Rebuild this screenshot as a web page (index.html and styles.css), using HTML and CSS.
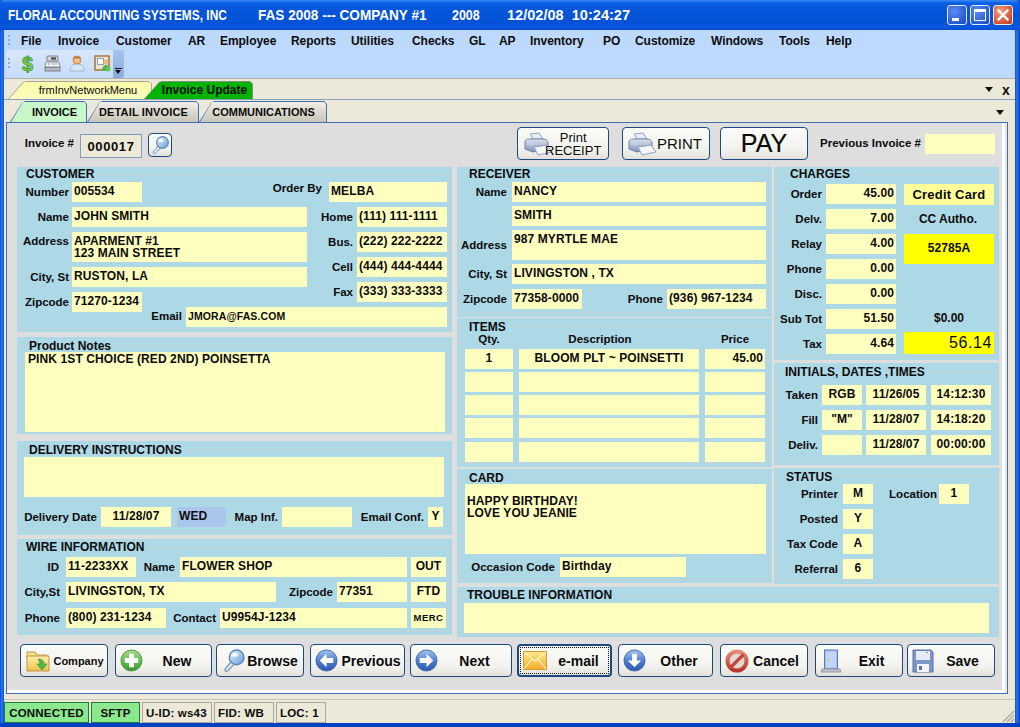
FILE: index.html
```html
<!DOCTYPE html>
<html lang="en">
<head>
<meta charset="utf-8">
<title>Floral Accounting Systems</title>
<link rel="stylesheet" href="styles.css">
</head>
<body>
<svg class="defs" aria-hidden="true">
  <defs>
    <linearGradient id="gBlue" x1="0" y1="0" x2="0" y2="1"><stop offset="0" stop-color="#a9c4f0"/><stop offset=".5" stop-color="#4f7fd0"/><stop offset="1" stop-color="#2f58a8"/></linearGradient>
    <linearGradient id="gGreen" x1="0" y1="0" x2="0" y2="1"><stop offset="0" stop-color="#a8dc90"/><stop offset=".6" stop-color="#5cb84c"/><stop offset="1" stop-color="#3c9636"/></linearGradient>
    <linearGradient id="gMail" x1="0" y1="0" x2="0" y2="1"><stop offset="0" stop-color="#ffe78a"/><stop offset="1" stop-color="#f4ae2e"/></linearGradient>
    <linearGradient id="gFolder" x1="0" y1="0" x2="0" y2="1"><stop offset="0" stop-color="#fff0a8"/><stop offset="1" stop-color="#efc04a"/></linearGradient>
    <linearGradient id="gPrint" x1="0" y1="0" x2="0" y2="1"><stop offset="0" stop-color="#dfe4ee"/><stop offset="1" stop-color="#7f93b8"/></linearGradient>
    <linearGradient id="gLens" x1="0" y1="0" x2="1" y2="1"><stop offset="0" stop-color="#eef6ff"/><stop offset="1" stop-color="#5f9ad8"/></linearGradient>
    <linearGradient id="gRed" x1="0" y1="0" x2="0" y2="1"><stop offset="0" stop-color="#e48a78"/><stop offset="1" stop-color="#b8382a"/></linearGradient>
    <symbol id="iPrinter" viewBox="0 0 30 24">
      <path d="M7 2l9-1 4 6H10z" fill="#e8edf5" stroke="#8ea0c0"/>
      <path d="M2 10c0-2 2-3 4-3h14c3 0 5 2 5 4v5l-15 4-8-3z" fill="url(#gPrint)" stroke="#6f82a8"/>
      <path d="M11 15l13-2 5 7-14 3z" fill="#f4f6fa" stroke="#8ea0c0"/>
      <ellipse cx="9" cy="11" rx="4" ry="2" fill="#c4d0e8"/>
    </symbol>
    <symbol id="iLens" viewBox="0 0 24 24">
      <path d="M10 13l-6 7c-1 2 1 3 2.500 2l6.500-6.500z" fill="#dce6f2" stroke="#6d8cb0"/>
      <circle cx="15" cy="9" r="7" fill="url(#gLens)" stroke="#5d86b8" stroke-width="1.400"/>
      <ellipse cx="13" cy="6.500" rx="3.500" ry="2" fill="#fff" opacity=".8"/>
    </symbol>
  </defs>
</svg>

<div class="window">
  <header class="titlebar">
    <span class="tt tt-a"><b>FLORAL ACCOUNTING SYSTEMS, INC</b></span>
    <span class="tt tt-b"><b>FAS 2008 --- COMPANY #1</b></span>
    <span class="tt tt-c"><b>2008</b></span>
    <span class="tt tt-d"><b>12/02/08&nbsp; 10:24:27</b></span>
    <div class="winbtns">
      <span class="wb"><i class="wb-min"></i></span>
      <span class="wb"><i class="wb-max"></i></span>
      <span class="wb wb-close"><svg viewBox="0 0 20 20" width="20" height="20"><path d="M5.500 5.500l9 9M14.500 5.500l-9 9" stroke="#fff" stroke-width="2.400" stroke-linecap="square"/></svg></span>
    </div>
  </header>

  <div class="menuarea">
    <nav class="menubar">
      <span class="grip"></span>
      <span class="mi m-file">File</span><span class="mi m-inv">Invoice</span><span class="mi m-cus">Customer</span><span class="mi m-ar">AR</span><span class="mi m-emp">Employee</span><span class="mi m-rep">Reports</span><span class="mi m-uti">Utilities</span><span class="mi m-che">Checks</span><span class="mi m-gl">GL</span><span class="mi m-ap">AP</span><span class="mi m-ivt">Inventory</span><span class="mi m-po">PO</span><span class="mi m-cst">Customize</span><span class="mi m-win">Windows</span><span class="mi m-too">Tools</span><span class="mi m-hlp">Help</span>
    </nav>
    <div class="toolbar">
      <span class="grip grip-tb"></span>
      <span class="tb-dollar">$</span>
      <svg class="tb-icon tb-reg" viewBox="0 0 17 17" width="17" height="17"><rect x="3" y="1" width="11" height="5" rx="1" fill="#d4d8de" stroke="#7c828c"/><rect x="7" y="2.500" width="5" height="2" fill="#3a3f48"/><path d="M2 7h13l1 5H1z" fill="#f2f3f5" stroke="#8a9098"/><rect x="1" y="12.500" width="15" height="3.500" fill="#b6bcc6" stroke="#7c828c"/><path d="M4 9h2M8 9h2M11 9h2" stroke="#8a9098"/></svg>
      <svg class="tb-icon tb-per" viewBox="0 0 16 17" width="16" height="17"><path d="M1 16c0-5 3-7 7-7s7 2 7 7z" fill="#d8e6f8" stroke="#9cb4d8"/><circle cx="8" cy="5" r="4" fill="#f4be82" stroke="#c48a4a"/><path d="M4 4c1-3 7-3 8 0-3-1-5-1-8 0z" fill="#b8722a"/></svg>
      <svg class="tb-icon tb-card" viewBox="0 0 17 17" width="17" height="17"><rect x="1" y="1" width="14" height="14" fill="#f0e4d0" stroke="#a8743c" stroke-width="1.500"/><rect x="3.500" y="3.500" width="6" height="6" fill="#fff" stroke="#8aa0c0"/><circle cx="12" cy="7" r="2.500" fill="#f0b878"/><path d="M8 16c0-4 2-6 4-6s4 2 4 6z" fill="#4fb848"/><circle cx="14" cy="14" r="2.500" fill="#62c85a"/></svg>
      <span class="tb-more"><i></i></span>
    </div>
  </div>

  <div class="doc-tabs">
    <span class="doc-tab doc-yellow"><span>frmInvNetworkMenu</span></span>
    <span class="doc-tab doc-green"><span>Invoice Update</span></span>
    <span class="tri tri-doc"></span>
    <span class="doc-x">x</span>
  </div>

  <div class="sub-tabs">
    <span class="sub-tab sub-a"><span>INVOICE</span></span>
    <span class="sub-tab sub-b"><span>DETAIL INVOICE</span></span>
    <span class="sub-tab sub-c"><span>COMMUNICATIONS</span></span>
    <span class="tri tri-sub"></span>
  </div>

  <main class="frame">
    <div class="form">
      <div class="form-top">
        <span class="lb inv-lb">Invoice #</span>
        <span class="inv-no">000017</span>
        <button class="btn btn-find"><svg viewBox="0 0 24 24" width="20" height="20"><use href="#iLens"/></svg></button>
        <button class="btn btn-receipt"><svg viewBox="0 0 30 24" width="30" height="24"><use href="#iPrinter"/></svg><span>Print<br>RECEIPT</span></button>
        <button class="btn btn-print"><svg viewBox="0 0 30 24" width="30" height="24"><use href="#iPrinter"/></svg><span>PRINT</span></button>
        <button class="btn btn-pay">PAY</button>
        <span class="lb prev-lb">Previous Invoice #</span>
        <span class="f w70"></span>
      </div>

      <div class="form-main">
        <div class="col-left">
          <section class="panel h-cust">
            <div class="box cust">
              <h2 class="legend lg-cust">CUSTOMER</h2>
              <div class="cust-cols">
                <div class="cust-l">
                  <div class="r"><span class="lb w48 mr3">Number</span><span class="f w70">005534</span></div>
                  <div class="r"><span class="lb w48 mr3">Name</span><span class="f w235">JOHN SMITH</span></div>
                  <div class="r r-top"><span class="lb w48 mr3 lb-addr">Address</span><span class="f w235 ta2">APARMENT #1<br>123 MAIN STREET</span></div>
                  <div class="r"><span class="lb w48 mr3">City, St</span><span class="f w235">RUSTON, LA</span></div>
                  <div class="r"><span class="lb w48 mr3">Zipcode</span><span class="f w70">71270-1234</span></div>
                </div>
                <div class="cust-r">
                  <div class="r re"><span class="lb orderby">Order By</span><span class="f w118">MELBA</span></div>
                  <div class="r re"><span class="lb">Home</span><span class="f w90">(111) 111-1111</span></div>
                  <div class="r re"><span class="lb">Bus.</span><span class="f w90">(222) 222-2222</span></div>
                  <div class="r re"><span class="lb">Cell</span><span class="f w90">(444) 444-4444</span></div>
                  <div class="r re"><span class="lb">Fax</span><span class="f w90">(333) 333-3333</span></div>
                </div>
              </div>
              <div class="r re cust-email"><span class="lb lb-up">Email</span><span class="f w261 f-small">JMORA@FAS.COM</span></div>
            </div>
          </section>

          <section class="panel h-notes">
            <div class="box notes">
              <h2 class="legend lg-notes">Product Notes</h2>
              <div class="f w420 h80 ftop">PINK 1ST CHOICE (RED 2ND) POINSETTA</div>
            </div>
          </section>

          <section class="panel h-deliv">
            <div class="box deliv">
              <h2 class="legend lg-deliv">DELIVERY INSTRUCTIONS</h2>
              <div class="f w420 h40"></div>
              <div class="r deliv-row">
                <span class="lb w75">Delivery Date</span><span class="f w70 tc">11/28/07</span>
                <span class="f f-blue w49 ml6">WED</span>
                <span class="lb w52">Map Inf.</span><span class="f w70"></span>
                <span class="lb w72">Email Conf.</span><span class="f w15 tc">Y</span>
              </div>
            </div>
          </section>

          <section class="panel h-wire">
            <div class="box wire">
              <h2 class="legend lg-wire">WIRE INFORMATION</h2>
              <div class="r"><span class="lb w38 mr7">ID</span><span class="f w70">11-2233XX</span><span class="lb w39 mr5">Name</span><span class="f w227">FLOWER SHOP</span><span class="f w35 ml4 tc">OUT</span></div>
              <div class="r mt5"><span class="lb w39 mr6">City,St</span><span class="f w210">LIVINGSTON, TX</span><span class="lb w57">Zipcode</span><span class="f w70">77351</span><span class="f w35 ml4 tc">FTD</span></div>
              <div class="r mt6"><span class="lb w39 mr6">Phone</span><span class="f w100">(800) 231-1234</span><span class="lb w50">Contact</span><span class="f w187">U9954J-1234</span><span class="f w35 ml4 tc f-tiny">MERC</span></div>
            </div>
          </section>
        </div>

        <div class="col-rest">
          <div class="rest-top">
            <div class="col-mid">
              <section class="panel h-recv">
                <div class="box recv">
                  <h2 class="legend lg-recv">RECEIVER</h2>
                  <div class="r"><span class="lb w46 mr5">Name</span><span class="f w254">NANCY</span></div>
                  <div class="r mt4"><span class="lb w46 mr5"></span><span class="f w254">SMITH</span></div>
                  <div class="r mt4"><span class="lb w46 mr5">Address</span><span class="f w254 h30 ftop">987 MYRTLE MAE</span></div>
                  <div class="r mt4"><span class="lb w46 mr5">City, St</span><span class="f w254">LIVINGSTON , TX</span></div>
                  <div class="r mt5"><span class="lb w46 mr5">Zipcode</span><span class="f w70">77358-0000</span><span class="lb w81">Phone</span><span class="f w99">(936) 967-1234</span></div>
                </div>
              </section>

              <section class="panel h-items">
                <div class="box items">
                  <h2 class="legend lg-items">ITEMS</h2>
                  <div class="items-grid">
                    <span class="ih">Qty.</span><span class="ih ih-d">Description</span><span class="ih">Price</span>
                    <span class="f tc">1</span><span class="f tc">BLOOM PLT ~ POINSETTI</span><span class="f tr">45.00</span>
                    <span class="f"></span><span class="f"></span><span class="f"></span>
                    <span class="f"></span><span class="f"></span><span class="f"></span>
                    <span class="f"></span><span class="f"></span><span class="f"></span>
                    <span class="f it-last"></span><span class="f it-last"></span><span class="f it-last"></span>
                  </div>
                </div>
              </section>

              <section class="panel h-card">
                <div class="box card">
                  <h2 class="legend lg-card">CARD</h2>
                  <div class="f w301 h70 card-msg">HAPPY BIRTHDAY!<br>LOVE YOU JEANIE</div>
                  <div class="r mt3"><span class="lb w90 mr5">Occasion Code</span><span class="f w126">Birthday</span></div>
                </div>
              </section>
            </div>

            <div class="col-right">
              <section class="panel h-chg">
                <div class="box chg">
                  <h2 class="legend lg-chg">CHARGES</h2>
                  <div class="chg-cols">
                    <div class="chg-l">
                      <div class="r"><span class="lb w44">Order</span><span class="f w70 tr">45.00</span></div>
                      <div class="r"><span class="lb w44">Delv.</span><span class="f w70 tr">7.00</span></div>
                      <div class="r"><span class="lb w44">Relay</span><span class="f w70 tr">4.00</span></div>
                      <div class="r"><span class="lb w44">Phone</span><span class="f w70 tr">0.00</span></div>
                      <div class="r"><span class="lb w44">Disc.</span><span class="f w70 tr">0.00</span></div>
                      <div class="r"><span class="lb w44">Sub Tot</span><span class="f w70 tr">51.50</span></div>
                      <div class="r"><span class="lb w44">Tax</span><span class="f w70 tr">4.64</span></div>
                    </div>
                    <div class="chg-r">
                      <span class="f f-pay tc">Credit Card</span>
                      <span class="chg-note">CC Autho.</span>
                      <span class="f f-auth tc">52785A</span>
                      <span class="chg-zero">$0.00</span>
                      <span class="f f-total tr">56.14</span>
                    </div>
                  </div>
                </div>
              </section>

              <section class="panel h-init">
                <div class="box init">
                  <h2 class="legend lg-init">INITIALS, DATES ,TIMES</h2>
                  <div class="r"><span class="lb w40">Taken</span><span class="f w40 tc">RGB</span><span class="f w60 ml4 tc">11/26/05</span><span class="f w60 ml5 tc">14:12:30</span></div>
                  <div class="r mt5"><span class="lb w40">Fill</span><span class="f w40 tc">"M"</span><span class="f w60 ml4 tc">11/28/07</span><span class="f w60 ml5 tc">14:18:20</span></div>
                  <div class="r mt5"><span class="lb w40">Deliv.</span><span class="f w40 tc"></span><span class="f w60 ml4 tc">11/28/07</span><span class="f w60 ml5 tc">00:00:00</span></div>
                </div>
              </section>

              <section class="panel h-stat">
                <div class="box stat">
                  <h2 class="legend lg-stat">STATUS</h2>
                  <div class="r"><span class="lb w60 mr5">Printer</span><span class="f w30 tc">M</span><span class="lb lb-loc">Location</span><span class="f w30 tc">1</span></div>
                  <div class="r mt5"><span class="lb w60 mr5">Posted</span><span class="f w30 tc">Y</span></div>
                  <div class="r mt5"><span class="lb w60 mr5">Tax Code</span><span class="f w30 tc">A</span></div>
                  <div class="r mt5"><span class="lb w60 mr5">Referral</span><span class="f w30 tc">6</span></div>
                </div>
              </section>
            </div>
          </div>

          <section class="panel h-trbl">
            <div class="box trbl">
              <h2 class="legend lg-trbl">TROUBLE INFORMATION</h2>
              <div class="f w525 h30"></div>
            </div>
          </section>
        </div>
      </div>

      <div class="form-buttons">
        <button class="btn b-company"><svg viewBox="0 0 26 24" width="26" height="24"><path d="M1 6V3h8l2 3h10v4H1z" fill="#f8e08a" stroke="#c0964a"/><path d="M1 22V7h22v15z" fill="url(#gFolder)" stroke="#c0964a"/><path d="M12 10c4 0 6 2 6 5h3l-5 6-5-6h3c0-2-1-3-2-5z" fill="#54b848" stroke="#2f8a30" stroke-width=".6"/></svg><span>Company</span></button>
        <button class="btn b-new"><svg viewBox="0 0 24 24" width="23" height="23"><circle cx="12" cy="12" r="11" fill="url(#gGreen)" stroke="#4f9a46"/><path d="M9.500 5h5v4.500H19v5h-4.500V19h-5v-4.500H5v-5h4.500z" fill="#fff"/></svg><span>New</span></button>
        <button class="btn b-browse"><svg viewBox="0 0 24 24" width="25" height="25"><use href="#iLens"/></svg><span>Browse</span></button>
        <button class="btn b-prev"><svg viewBox="0 0 24 24" width="23" height="23"><circle cx="12" cy="12" r="11" fill="url(#gBlue)" stroke="#3f66b4"/><path d="M12 5l-7 7 7 7v-4.500h7v-5h-7z" fill="#fff"/></svg><span>Previous</span></button>
        <button class="btn b-next"><svg viewBox="0 0 24 24" width="23" height="23"><circle cx="12" cy="12" r="11" fill="url(#gBlue)" stroke="#3f66b4"/><path d="M12 5l7 7-7 7v-4.500H5v-5h7z" fill="#fff"/></svg><span>Next</span></button>
        <button class="btn b-mail"><svg viewBox="0 0 24 19" width="24" height="19"><rect x=".5" y=".5" width="23" height="18" fill="url(#gMail)" stroke="#d09a30"/><path d="M1 1l11 9L23 1M1 18l8-10M23 18l-8-10" fill="none" stroke="#fff4c0" stroke-width="1.200"/></svg><span>e-mail</span></button>
        <button class="btn b-other"><svg viewBox="0 0 24 24" width="23" height="23"><circle cx="12" cy="12" r="11" fill="url(#gBlue)" stroke="#3f66b4"/><path d="M5 12l7 7 7-7h-4.500V5h-5v7z" fill="#fff"/></svg><span>Other</span></button>
        <button class="btn b-cancel"><svg viewBox="0 0 24 24" width="24" height="24"><circle cx="12" cy="12" r="9.500" fill="#e8d8d4" stroke="url(#gRed)" stroke-width="4"/><path d="M5.500 18.500l13-13" stroke="#c4483a" stroke-width="3.200"/></svg><span>Cancel</span></button>
        <button class="btn b-exit"><svg viewBox="0 0 20 24" width="20" height="24"><rect x="3.500" y="1" width="13" height="19" fill="#a8c0ea" stroke="#5a7cb8"/><rect x="5" y="2.500" width="10" height="16" fill="#c0d4f4"/><circle cx="7" cy="11" r="1" fill="#e8c050"/><path d="M1 20h18l1 3H0z" fill="#c0c4ca" stroke="#7c828c" stroke-width=".7"/></svg><span>Exit</span></button>
        <button class="btn b-save"><svg viewBox="0 0 22 24" width="22" height="24"><path d="M1 1h18l2 2v20H1z" fill="#7c96c8" stroke="#5a72a8"/><rect x="4" y="2" width="14" height="9" fill="#e6ecf6"/><rect x="14" y="3" width="2" height="1" fill="#7c96c8"/><rect x="5" y="15" width="12" height="8" fill="#f2f4f8"/><rect x="7" y="17" width="3" height="4" fill="#5a72a8"/></svg><span>Save</span></button>
      </div>
    </div>
  </main>

  <footer class="status">
    <span class="st st-on st-a">CONNECTED</span>
    <span class="st st-on st-b">SFTP</span>
    <span class="st st-c">U-ID: ws43</span>
    <span class="st st-d">FID: WB</span>
    <span class="st st-e">LOC: 1</span>
    <svg class="st-grip" viewBox="0 0 14 14" width="14" height="14"><path d="M13 2L2 13M13 6l-7 7M13 10l-3 3" stroke="#a8a498" stroke-width="1.200"/></svg>
  </footer>
</div>
</body>
</html>
```

FILE: styles.css
```css
* { box-sizing: border-box; }
html, body { margin: 0; padding: 0; }
body { width: 1020px; height: 727px; overflow: hidden; background: #ece9d8; font: bold 12px "Liberation Sans", Arial, sans-serif; color: #0b0b0b; }
.defs { position: absolute; width: 0; height: 0; }

.window { width: 1020px; height: 727px; display: flex; flex-direction: column; padding: 0 5px 0 4px; background: linear-gradient(90deg, #0a50d8 0, #2a78f0 2px, #0a50d8 4px) left / 4px 100% no-repeat, linear-gradient(90deg, #0a50d8, #2a78f0 2px, #0638b8) right / 5px 100% no-repeat, #ece9d8; position: relative; border-bottom: 4px solid #0340c4; }

/* title bar */
.titlebar { height: 30px; flex: none; margin: 0 -5px 0 -4px; padding-left: 8px; display: flex; align-items: center; color: #fff; background: linear-gradient(#3a8af4 0, #0b5ee4 3px, #0554d8 12px, #0552d6 24px, #0a5ae0 28px, #0346c8 30px); border-radius: 6px 6px 0 0; }
.tt { display: block; flex: none; white-space: nowrap; }
.tt b { display: inline-block; font: bold 14px "Liberation Sans", sans-serif; transform: scaleX(.89); transform-origin: 0 50%; }
.tt-a { width: 250px; }
.tt-a b { transform: scaleX(.85); }
.tt-b { width: 194px; }
.tt-b b { transform: scaleX(.97); }
.tt-c { width: 55px; }
.tt-d { width: 140px; }
.tt-d b { transform: scaleX(1.04); }
.winbtns { margin-left: auto; margin-right: 7px; display: flex; gap: 3px; }
.wb { width: 20px; height: 20px; border: 1px solid #e4eefc; border-radius: 3px; background: radial-gradient(circle at 35% 30%, #5a8cf0, #2a5ad8 70%, #1a44b8); display: block; position: relative; overflow: hidden; }
.wb-close { background: radial-gradient(circle at 35% 30%, #f0a088, #de5a38 60%, #b83818); }
.wb i { display: block; position: absolute; }
.wb svg { position: absolute; left: -1px; top: -1px; }
.wb-min { left: 4px; bottom: 3px; width: 7px; height: 3px; background: #fff; }
.wb-max { left: 3px; top: 3px; width: 12px; height: 12px; border: 1px solid #fff; border-top-width: 3px; }

/* menu */
.menuarea { flex: none; background: #bdd9fd; border-bottom: 1px solid #b0b0a8; height: 49px; }
.menubar { height: 20px; padding-top: 2px; display: flex; align-items: center; font-size: 12px; position: relative; }
.grip { width: 2px; height: 12px; margin-left: 4px; background: repeating-linear-gradient(#8aa8d0 0 2px, transparent 2px 4px); flex: none; }
.mi { white-space: nowrap; letter-spacing: -.05px; }
.m-file { margin-left: 11px; width: 37px; }
.m-inv { width: 58px; }
.m-cus { width: 72px; }
.m-ar { width: 32px; }
.m-emp { width: 71px; }
.m-rep { width: 60px; }
.m-uti { width: 61px; }
.m-che { width: 57px; }
.m-gl { width: 30px; }
.m-ap { width: 31px; }
.m-ivt { width: 73px; }
.m-po { width: 32px; }
.m-cst { width: 76px; }
.m-win { width: 68px; }
.m-too { width: 47px; }

.toolbar { width: 118px; margin-left: 2px; height: 28px; display: flex; align-items: center; background: linear-gradient(#d8e7fb, #c6dcf8); border-radius: 3px 0 3px 3px; position: relative; }
.grip-tb { margin-left: 2px; }
.tb-dollar { font: bold 20px "Liberation Sans", sans-serif; color: #84cc54; -webkit-text-stroke: .8px #3f9a34; width: 13px; margin-left: 12px; line-height: 27px; }
.tb-icon { display: block; flex: none; }
.tb-reg { margin-left: 9px; margin-top: -1px; }
.tb-per { margin-left: 8px; margin-top: -1px; }
.tb-card { margin-left: 9px; margin-top: -1px; }
.tb-more { margin-left: auto; width: 11px; height: 28px; background: linear-gradient(#a8c4ee, #8aa8dc); position: relative; border-radius: 0 0 3px 0; }
.tb-more i { position: absolute; left: 2px; bottom: 4px; border: 3.500px solid transparent; border-top: 4px solid #111; border-bottom: 0; }
.tb-more::before { content: ""; position: absolute; left: 2px; bottom: 9px; width: 7px; height: 1px; background: #111; }

/* document tabs */
.doc-tabs { height: 21px; flex: none; display: flex; align-items: flex-end; padding-left: 4px; border-bottom: 1px solid #88a0bc; position: relative; }
.doc-tab { height: 18px; position: relative; display: block; background: #8e8e80; clip-path: polygon(0 100%, 15px 1px, 18px 0, calc(100% - 3px) 0, 100% 3px, 100% 100%); font-size: 12px; text-align: center; line-height: 19px; white-space: nowrap; }
.doc-tab::before { content: ""; position: absolute; inset: 1px 1px 0 1px; clip-path: polygon(0 100%, 15px 0, calc(100% - 2px) 0, 100% 2px, 100% 100%); }
.doc-tab > span { position: relative; }
.doc-yellow { width: 144px; padding-left: 16px; font-weight: normal; font-size: 11px; margin-right: -8px; background: #a6a692; }
.doc-yellow::before { background: linear-gradient(#fbfaa8, #fdfdc0); }
.doc-green { width: 109px; padding-left: 12px; background: #78907c; }
.doc-green::before { background: #00b400; }
.tri { width: 0; height: 0; border: 4px solid transparent; border-top: 5px solid #111; border-bottom: 0; display: block; flex: none; }
.tri-doc { margin-left: auto; margin-right: 4px; margin-bottom: 7px; }
.doc-x { font: bold 14px "Liberation Sans", sans-serif; width: 18px; text-align: center; margin-bottom: 1px; }

.sub-tabs { height: 22px; flex: none; display: flex; align-items: flex-end; padding-left: 6px; position: relative; }
.sub-tab { height: 21px; position: relative; display: block; background: #3f6fb5; clip-path: polygon(0 100%, 12px 2px, 15px 0, calc(100% - 3px) 0, 100% 3px, 100% 100%); font-size: 11px; text-align: center; line-height: 22px; white-space: nowrap; }
.sub-tab::before { content: ""; position: absolute; inset: 1px 1px 0 1px; background: linear-gradient(#f0eee6, #c8c6b8); clip-path: polygon(0 100%, 12px 0, calc(100% - 2px) 0, 100% 2px, 100% 100%); }
.sub-tab > span { position: relative; }
.sub-a { width: 77px; padding-left: 12px; }
.sub-a::before { background: #c8f8c8; }
.sub-b { width: 112px; padding-left: 1px; letter-spacing: .15px; }
.sub-c { width: 128px; padding-left: 1px; }
.tri-sub { margin-left: auto; margin-right: 11px; margin-bottom: 7px; }

/* frame */
.frame { height: 572px; flex: none; margin-left: 2px; margin-right: 7px; border: 1px solid #3f6fb5; background: #fff; padding-right: 5px; padding-bottom: 3px; box-shadow: inset -2px 0 0 #e8e6dc; }
.form { height: 100%; background: #dedede; padding: 4px 0 0 10px; }
.form-top { height: 40px; display: flex; align-items: flex-start; }
.lb { display: block; flex: none; text-align: right; white-space: nowrap; margin-right: 4px; line-height: 14px; font-size: 11.5px; }
.inv-lb { width: 50px; margin: 9px 6px 0 7px; }
.inv-no { width: 62px; height: 24px; margin-top: 7px; background: #ece9d8; border: 1px solid #7f9db9; text-align: center; line-height: 23px; font-size: 13px; letter-spacing: .6px; flex: none; }

.btn { display: flex; align-items: center; padding: 0; margin: 0; height: 33px; flex: none; font: bold 14px "Liberation Sans", sans-serif; color: #0b0b0b; background: linear-gradient(#fbfbf8, #f2f2ee 70%, #e2e0d8); border: 1.500px solid #1c4a80; border-radius: 4px; }
.btn svg { flex: none; display: block; }
.btn span { flex: 1; text-align: center; }
.btn-find { width: 24px; height: 24px; margin: 6px 0 0 6px; justify-content: center; }
.btn-receipt { width: 92px; margin-left: 345px; padding-left: 5px; font: 13px/13px "Liberation Sans", sans-serif; }
.btn-receipt span { margin-left: -8px; flex: none; }
.btn-print { width: 88px; margin-left: 13px; padding-left: 4px; font: 15px "Liberation Sans", sans-serif; }
.btn-print span { padding-right: 8px; }
.btn-pay { width: 88px; margin-left: 10px; justify-content: center; font: 25px "Liberation Sans", sans-serif; -webkit-text-stroke: .2px #111; }
.prev-lb { margin: 9px 4px 0 12px; }
.form-top > .f { margin-top: 7px; }

/* form grid */
.form-main { display: flex; gap: 5px; height: 470px; }
.col-left { width: 435px; height: 468px; display: flex; flex-direction: column; }
.col-rest { width: 542px; display: flex; flex-direction: column; }
.rest-top { height: 417px; display: flex; gap: 2px; }
.col-mid { width: 315px; display: flex; flex-direction: column; }
.col-right { width: 225px; display: flex; flex-direction: column; }

.panel { background: #add8e6; padding: 8px 3px 3px; flex: none; }
.box { height: 100%; border: 1px solid #bfd2d6; position: relative; }
.legend { position: absolute; margin: 0; padding: 0 2px; background: #add8e6; font-size: 12px; font-weight: bold; line-height: 12px; white-space: nowrap; }
.lg-cust { left: 3px; top: -8px; }
.lg-notes { left: 6px; top: -6px; }
.lg-deliv { left: 6px; top: -6px; }
.lg-wire { left: 3px; top: -7px; }
.lg-recv { left: 6px; top: -8px; }
.lg-items { left: 6px; top: -6px; }
.lg-card { left: 6px; top: -6px; }
.lg-chg { left: 10px; top: -8px; }
.lg-init { left: 5px; top: -6px; }
.lg-stat { left: 6px; top: -6px; }
.lg-trbl { left: 4px; top: -7px; }

.h-cust { height: 165px; }
.h-notes { height: 97px; margin-top: 5px; }
.h-deliv { height: 94px; margin-top: 7px; }
.h-wire { height: 96px; margin-top: 4px; }
.h-recv { height: 150px; }
.h-items { height: 149px; margin-top: 1px; }
.h-card { height: 114px; margin-top: 2px; }
.h-chg { height: 193px; }
.h-init { height: 102px; margin-top: 3px; }
.h-stat { height: 116px; margin-top: 3px; }
.h-trbl { height: 50px; margin-top: 3px; }

.r { display: flex; align-items: center; }
.re { justify-content: flex-end; }
.r-top { align-items: flex-start; }

.f { display: block; flex: none; height: 20px; background: #ffffc0; padding: 0 2px; line-height: 19px; font-size: 12px; font-weight: bold; white-space: nowrap; overflow: hidden; letter-spacing: .1px; }
.tc { text-align: center; }
.tr { text-align: right; }
.ftop { line-height: 13px; padding-top: 3px; }
.f-blue { background: #a9c7ec; }
.f-small { font-size: 10.5px; }
.f-tiny { font-size: 9.5px; letter-spacing: .5px; padding: 0; }

.w15 { width: 15px; } .w30 { width: 30px; } .w35 { width: 35px; } .w38 { width: 38px; } .w39 { width: 39px; } .w40 { width: 40px; } .w44 { width: 44px; } .w46 { width: 46px; } .w48 { width: 48px; } .w49 { width: 49px; } .w50 { width: 50px; } .w52 { width: 52px; } .w57 { width: 57px; } .w60 { width: 60px; } .w70 { width: 70px; } .w72 { width: 72px; } .w75 { width: 75px; } .w81 { width: 81px; } .w90 { width: 90px; } .w99 { width: 99px; } .w100 { width: 100px; } .w118 { width: 118px; } .w126 { width: 126px; } .w187 { width: 187px; } .w210 { width: 210px; } .w227 { width: 227px; } .w235 { width: 235px; } .w254 { width: 254px; } .w261 { width: 261px; } .w301 { width: 301px; } .w420 { width: 420px; } .w525 { width: 525px; }
.h30 { height: 30px; } .h40 { height: 40px; } .h70 { height: 70px; } .h80 { height: 80px; }
.mr3 { margin-right: 3px; } .mr5 { margin-right: 5px; } .mr6 { margin-right: 6px; } .mr7 { margin-right: 7px; }
.ml4 { margin-left: 4px; } .ml5 { margin-left: 5px; } .ml6 { margin-left: 6px; }
.mt3 { margin-top: 3px; } .mt4 { margin-top: 4px; } .mt5 { margin-top: 5px; } .mt6 { margin-top: 6px; }

/* customer */
.cust { padding-top: 6px; }
.cust-cols { display: flex; }
.cust-l { width: 287px; flex: none; display: flex; flex-direction: column; gap: 5px; }
.cust-r { flex: 1; min-width: 0; padding-right: 1px; display: flex; flex-direction: column; gap: 5px; }
.ta2 { height: 30px; line-height: 12px; padding-top: 3px; }
.lb-addr { margin-top: 2px; }
.orderby { align-self: flex-start; margin-right: 7px; margin-top: -1px; }
.cust-email { margin-top: -5px; padding-right: 1px; }
.lb-up { margin-bottom: 2px; }
.notes { padding: 6px 0 0 4px; }
.notes .f { padding-left: 3px; padding-top: 1px; }
.deliv { padding: 7px 0 0 3px; }
.deliv-row { margin: 10px 0 0 -2px; }
.wire { padding-top: 9px; }
.recv { padding-top: 6px; }
.items { padding: 6px 0 0 4px; }
.items-grid { display: grid; grid-template-columns: 48px 180px 60px; column-gap: 6px; row-gap: 3px; grid-template-rows: 13px; }
.ih { text-align: center; font-size: 11.5px; line-height: 13px; }
.ih-d { padding-right: 18px; }
.it-last { margin-top: 1px; }
.card { padding: 6px 0 0 4px; }
.card-msg { padding-top: 11px; line-height: 12px; }
.chg { padding-top: 8px; }
.chg-cols { display: flex; }
.chg-l { display: flex; flex-direction: column; gap: 5px; }
.chg-r { margin-left: 8px; width: 90px; display: flex; flex-direction: column; text-align: center; }
.f-pay { height: 21px; background: #ffff99; line-height: 21px; font-size: 13px; letter-spacing: .2px; }
.chg-note { height: 29px; line-height: 29px; font-size: 12px; padding-right: 2px; }
.f-auth { height: 30px; background: #ffff00; line-height: 29px; }
.chg-zero { height: 68px; padding-top: 47px; line-height: 14px; }
.f-total { height: 22px; background: #ffff00; font: 16px/21px "Liberation Sans", sans-serif; letter-spacing: .6px; padding-right: 2px; }
.init { padding-top: 13px; }
.stat { padding-top: 7px; }
.lb-loc { width: 48px; margin: 0 2px 0 16px; }
.trbl { padding: 7px 0 0 3px; }

/* bottom buttons */
.form-buttons { display: flex; margin: 7px 0 0 3px; }
.b-company { width: 88px; padding-left: 5px; font-size: 11px; }
.b-company span { padding-right: 2px; }
.b-new { width: 97px; margin-left: 7px; padding-left: 4px; }
.b-browse { width: 88px; margin-left: 4px; padding-left: 4px; }
.b-browse span { padding-right: 4px; }
.b-prev { width: 95px; margin-left: 6px; padding-left: 4px; }
.b-next { width: 102px; margin-left: 5px; padding-left: 4px; }
.b-mail { width: 95px; margin-left: 5px; padding-left: 4px; border-width: 2px; position: relative; }
.b-mail::after { content: ""; position: absolute; inset: 1px; border: 1px dotted #111; pointer-events: none; }
.b-other { width: 95px; margin-left: 6px; padding-left: 4px; }
.b-cancel { width: 88px; margin-left: 7px; padding-left: 4px; }
.b-cancel span { padding-right: 4px; }
.b-exit { width: 88px; margin-left: 7px; padding-left: 5px; }
.b-save { width: 88px; margin-left: 4px; padding-left: 4px; }
.b-save span { padding-right: 3px; }

/* status bar */
.status { flex: none; display: flex; align-items: flex-end; gap: 2px; background: #ece9d8; border-top: 1px solid #c8c6b8; position: relative; margin-top: 5px; height: 24px; }
.st { height: 21px; line-height: 20px; background: #ece9d8; border: 1px solid #a8a698; text-align: left; padding-left: 3px; font-size: 11.5px; letter-spacing: .2px; white-space: nowrap; }
.st-on { background: #8ce88c; border-color: #1f7a3c; }
.st-a { width: 85px; text-align: center; padding: 0; }
.st-b { width: 49px; text-align: center; padding: 0; }
.st-c { width: 70px; }
.st-d { width: 60px; }
.st-e { width: 50px; }
.st-grip { margin-left: auto; }
```
